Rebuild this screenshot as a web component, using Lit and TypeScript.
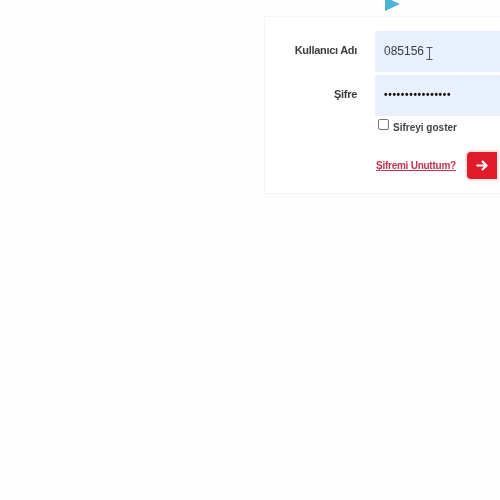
import { LitElement, html, css } from 'lit';
import { customElement } from 'lit/decorators.js';

@customElement('app-root')
export class AppRoot extends LitElement {
  static styles = css`
    :host {
      display: block;
      width: 500px;
      height: 500px;
      overflow: hidden;
      background: #fefefe;
      font-family: 'Liberation Sans', Arial, sans-serif;
    }

    .page {
      padding-left: 264px;
      filter: blur(0.35px);
    }

    .logo {
      display: block;
      height: 16px;
      padding-left: 121px;
    }

    .logo svg {
      display: block;
    }

    .card {
      box-sizing: border-box;
      width: 260px;
      height: 178px;
      padding: 14px 0 0 0;
      border: 1px solid #f4f4f4;
      border-right: none;
      background: #fff;
    }

    .row {
      display: grid;
      grid-template-columns: 110px 1fr;
      height: 41px;
      margin-bottom: 3px;
    }

    .row label {
      align-self: center;
      justify-self: end;
      margin-right: 18px;
      margin-bottom: 3px;
      font-size: 11px;
      font-weight: bold;
      letter-spacing: -0.3px;
      color: #3c3c3c;
    }

    .field {
      display: flex;
      align-items: center;
      padding-left: 9px;
      background: #e8effd;
      font-size: 12px;
      color: #3c3c3c;
    }

    .value {
      margin-bottom: 2px;
    }

    .cursor {
      margin-left: 2px;
      margin-top: 3px;
    }

    .dots {
      margin-bottom: 3px;
      font-size: 10px;
      letter-spacing: 0.7px;
      color: #111;
      font-weight: bold;
    }

    .show {
      display: flex;
      align-items: center;
      gap: 4px;
      margin: 3px 0 0 113px;
      font-size: 10px;
      font-weight: bold;
      color: #444;
    }

    .box {
      box-sizing: border-box;
      width: 11px;
      height: 11px;
      margin-bottom: 5px;
      border: 1px solid #777;
      border-radius: 2px;
      background: #fff;
    }

    .actions {
      display: flex;
      align-items: center;
      margin: 17px 0 0 111px;
    }

    .forgot {
      margin-bottom: 1px;
      font-size: 10px;
      font-weight: bold;
      letter-spacing: -0.25px;
      color: #c2334d;
      text-decoration: underline;
    }

    .go {
      display: flex;
      align-items: center;
      justify-content: center;
      box-sizing: border-box;
      width: 30px;
      height: 27px;
      margin-left: 11px;
      border-radius: 4px 0 0 4px;
      background: #e01c2a;
      box-shadow: 0 0 0 2px #fbe3e4;
    }
  `;

  render() {
    return html`
      <div class="page">
        <div class="logo">
          <svg width="16" height="11" viewBox="0 0 16 11">
            <polygon points="0,0 6,0 15,4 0,11" fill="#4bb3d6"></polygon>
          </svg>
        </div>
        <div class="card">
          <div class="row">
            <label>Kullanıcı Adı</label>
            <div class="field">
              <span class="value">085156</span>
              <svg class="cursor" width="7" height="13" viewBox="0 0 7 13" fill="none" stroke="#555" stroke-width="1">
                <path d="M0.5 0.5h6M3.5 0.5v12M0.5 12.5h6"></path>
              </svg>
            </div>
          </div>
          <div class="row">
            <label>Şifre</label>
            <div class="field"><span class="dots">••••••••••••••••</span></div>
          </div>
          <div class="show">
            <span class="box"></span>
            <span>Sifreyi goster</span>
          </div>
          <div class="actions">
            <span class="forgot">Şifremi Unuttum?</span>
            <div class="go">
              <svg width="12" height="11" viewBox="0 0 12 11" fill="none" stroke="#fff" stroke-width="2.2">
                <path d="M0.5 5.5h9M6 1l4.5 4.5L6 10"></path>
              </svg>
            </div>
          </div>
        </div>
      </div>
    `;
  }
}
